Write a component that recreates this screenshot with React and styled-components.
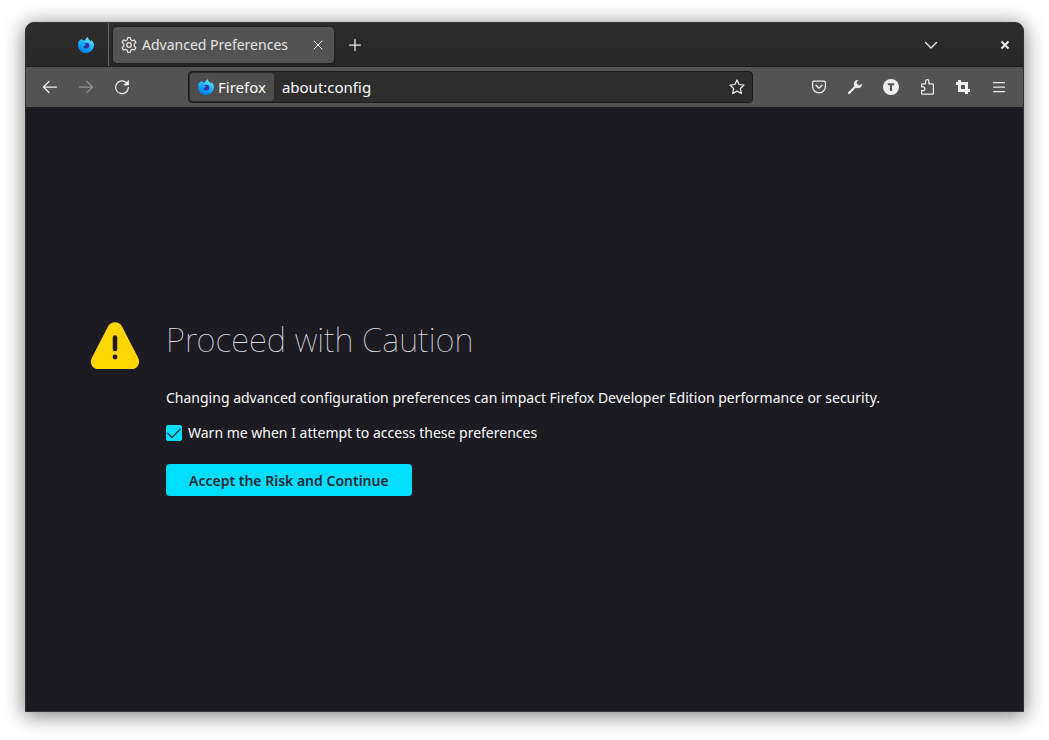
import React, { useState } from "react";
import styled, { createGlobalStyle } from "styled-components";

const GlobalStyle = createGlobalStyle`
  * {
    box-sizing: border-box;
  }

  body {
    margin: 0;
    background: #fff;
    color: #fbfbfe;
    font-family: "Noto Sans", sans-serif;
    font-size: 14px;
  }

  button,
  input {
    font: inherit;
    color: inherit;
  }
`;

const Desktop = styled.div`
  display: flex;
  min-height: 100vh;
  padding: 22px 25px 28px;
`;

const Window = styled.div`
  flex: 1;
  display: flex;
  flex-direction: column;
  min-width: 0;
  overflow: hidden;
  border: 1px solid #303032;
  border-radius: 9px 9px 0 0;
  background: #1c1b22;
  box-shadow: 0 3px 20px 1px rgba(0, 0, 0, 0.5);
`;

const TabBar = styled.header`
  display: flex;
  align-items: center;
  height: 44px;
  border-bottom: 1px solid #1c1c1c;
  background: linear-gradient(#2d2d2d, #282828);
`;

const PinnedApp = styled.button`
  display: flex;
  align-items: center;
  justify-content: flex-end;
  align-self: stretch;
  width: 83px;
  padding: 0 14px 0 0;
  border: 0;
  border-right: 1px solid #666;
  background: none;
`;

const Tab = styled.div`
  display: flex;
  align-items: center;
  width: 221px;
  height: 36px;
  margin-left: 4px;
  padding: 0 8px;
  border-radius: 4px;
  background: #535353;
  color: #e4e4e4;
  box-shadow: 0 0 3px rgba(0, 0, 0, 0.6);
`;

const TabTitle = styled.span`
  flex: 1;
  margin-left: 5px;
  white-space: nowrap;
`;

const IconButton = styled.button`
  display: flex;
  align-items: center;
  justify-content: center;
  flex: none;
  width: ${(props) => props.$width || 36}px;
  height: 32px;
  padding: 0;
  border: 0;
  background: none;
  color: #eee;
  opacity: ${(props) => (props.disabled ? 0.4 : 1)};
`;

const Spring = styled.div`
  flex: ${(props) => (props.$max ? `0 1 ${props.$max}px` : 1)};
`;

const NavBar = styled.nav`
  display: flex;
  align-items: center;
  height: 40px;
  padding: 0 6px;
  background: #535353;
`;

const UrlBar = styled.div`
  flex: 1;
  display: flex;
  align-items: center;
  min-width: 0;
  height: 32px;
  padding: 0 0 0 1px;
  border: 1px solid #1a1a1a;
  border-radius: 4px;
  background: #2d2d2d;
  font-size: 15px;
`;

const Identity = styled.span`
  display: flex;
  align-items: center;
  gap: 4px;
  height: 28px;
  padding: 0 8px;
  border-radius: 3px;
  background: #4d4d4d;
`;

const UrlInput = styled.input`
  flex: 1;
  min-width: 0;
  padding: 0 8px;
  border: 0;
  outline: 0;
  background: none;
`;

const Page = styled.main`
  flex: 1;
  display: flex;
  align-items: center;
  padding: 0 64px;
`;

const Warning = styled.section`
  display: flex;
  align-items: flex-start;
  gap: 26px;
`;

const Title = styled.h1`
  margin: 0 0 29px;
  color: #dedee3;
  font-size: 33px;
  font-weight: 100;
  line-height: 36px;
`;

const Text = styled.p`
  margin: 0 0 14px;
  line-height: 21px;
`;

const CheckRow = styled.label`
  display: flex;
  align-items: center;
  gap: 6px;
  margin-bottom: 21px;
  line-height: 21px;
`;

const Checkbox = styled.input`
  appearance: none;
  width: 16px;
  height: 16px;
  margin: 0;
  border: 1px solid #8f8f9d;
  border-radius: 2px;

  &:checked {
    border-color: #00ddff;
    background: #00ddff
      url("data:image/svg+xml,%3Csvg xmlns='http://www.w3.org/2000/svg' viewBox='0 0 16 16'%3E%3Cpath d='M1.500 8l4.500 4.500L14.500 4' fill='none' stroke='%232b2a33' stroke-width='1.200'/%3E%3C/svg%3E")
      center / 16px;
  }
`;

const PrimaryButton = styled.button`
  height: 32px;
  padding: 0 23px;
  border: 0;
  border-radius: 4px;
  background: #00ddff;
  color: #2b2a33;
  font-weight: 600;
`;

function Svg({ size = 16, children, ...rest }) {
  return (
    <svg
      width={size}
      height={size}
      viewBox="0 0 16 16"
      fill="none"
      stroke="currentColor"
      strokeWidth="1.25"
      strokeLinecap="round"
      strokeLinejoin="round"
      aria-hidden="true"
      {...rest}
    >
      {children}
    </svg>
  );
}

function FirefoxLogo({ id }) {
  return (
    <Svg stroke="none">
      <defs>
        <linearGradient id={id} x1="0.8" y1="0" x2="0.3" y2="1">
          <stop offset="0" stopColor="#80f5ee" />
          <stop offset="0.35" stopColor="#35c8fb" />
          <stop offset="0.7" stopColor="#0a9dfa" />
          <stop offset="1" stopColor="#0877ea" />
        </linearGradient>
      </defs>
      <path
        d="M10.300 0c-.5 1.200-.1 2.200 1 3 .9.600 1.500 1.100 1.900 1.900.2-.8.100-1.400-.1-2 2 1.300 2.900 3.300 2.900 5.300A7.800 7.800 0 0 1 8 16 7.900 7.900 0 0 1 0 8.200c0-2 .5-3.900 1.300-5.300 0 .5.100.8.300 1.100C2.100 3.200 2.900 2.300 4 1.700c-.1.700.1 1.200.5 1.700.8-.1 1.500 0 2.200.3C7.300 2.100 8.600.6 10.300 0z"
        fill={`url(#${id})`}
      />
      <path
        d="M5.200 6.300c.9-.4 1.700-.6 2.500-.6.800.1 1.300.2 1.800.4 1.500.600 2.300 1.900 1.800 3.400-.5 1.400-1.800 2.100-3.300 2-1.700-.1-3-1.300-3.200-2.800.7.300 1.200.2 1.800-.1.500-.3 1.200-.4 1.500-.9-1.200-.2-1.900-.6-2.900-1.400z"
        fill="#35309c"
      />
      <path
        d="M3.300 5.200c.9-.3 2.100-.1 2.800.7.500.6 1.200.9 2.200 1-.3.900-1.300 1-2 1.300-.8.400-.6 1.200.1 1.900-1.800-.1-3.500-2.600-3.100-4.900z"
        fill="#16a9fb"
      />
    </Svg>
  );
}

function App() {
  const [warn, setWarn] = useState(true);
  const [url, setUrl] = useState("about:config");

  return (
    <>
      <GlobalStyle />
      <Desktop>
        <Window>
          <TabBar>
            <PinnedApp aria-label="Firefox View">
              <FirefoxLogo id="viewLogo" />
            </PinnedApp>
            <Tab>
              <Svg>
                <circle cx="8" cy="8" r="2.300" />
                <path d="M6.700.700h2.600l.5 2.100 1.500.9 2.200-.7 1.400 2.400L13.200 7v2l1.700 1.600-1.400 2.400-2.200-.7-1.500.9-.5 2.100H6.700l-.5-2.100-1.500-.9-2.200.7-1.400-2.400L2.800 9V7L1.100 5.400 2.500 3l2.200.7 1.500-.9z" />
              </Svg>
              <TabTitle>Advanced Preferences</TabTitle>
              <IconButton $width={16} aria-label="Close tab">
                <Svg strokeWidth="1">
                  <path d="M4 4l8 8M12 4l-8 8" />
                </Svg>
              </IconButton>
            </Tab>
            <IconButton $width={42} aria-label="New tab">
              <Svg>
                <path d="M8 2.500v11M2.500 8h11" />
              </Svg>
            </IconButton>
            <Spring />
            <IconButton aria-label="List all tabs">
              <Svg>
                <path d="M2.500 5.500L8 11l5.500-5.500" />
              </Svg>
            </IconButton>
            <Spring $max={38} />
            <IconButton aria-label="Close window">
              <Svg strokeWidth="2" strokeLinecap="butt">
                <path d="M4.500 4.500l7 7M11.500 4.500l-7 7" />
              </Svg>
            </IconButton>
          </TabBar>
          <NavBar>
            <IconButton aria-label="Back">
              <Svg>
                <path d="M14.500 8H1.500M7 2.500L1.500 8 7 13.500" />
              </Svg>
            </IconButton>
            <IconButton aria-label="Forward" disabled>
              <Svg>
                <path d="M1.500 8h13M9 2.500L14.500 8 9 13.500" />
              </Svg>
            </IconButton>
            <IconButton aria-label="Reload">
              <Svg>
                <path d="M12.500 3.700A6.400 6.400 0 1 0 14.400 8.500" />
                <path d="M14.500 1.700v4.300H10.200z" fill="currentColor" strokeWidth="0.800" />
              </Svg>
            </IconButton>
            <Spring $max={48} />
            <UrlBar>
              <Identity>
                <FirefoxLogo id="urlLogo" />
                Firefox
              </Identity>
              <UrlInput
                aria-label="Address"
                value={url}
                onChange={(e) => setUrl(e.target.value)}
              />
              <IconButton $width={30} aria-label="Bookmark this page">
                <Svg>
                  <path d="M8 1l2.100 4.500 4.900.6-3.600 3.400.9 5L8 12.100l-4.300 2.400.9-5L1 6.100l4.900-.6z" />
                </Svg>
              </IconButton>
            </UrlBar>
            <Spring $max={48} />
            <IconButton aria-label="Save to Pocket">
              <Svg>
                <path d="M2.800 2.100h10.400q1.200 0 1.200 1.200v4.200a6.400 6.400 0 0 1-12.800 0V3.300q0-1.200 1.200-1.200z" />
                <path d="M5 6.200l3 3 3-3" />
              </Svg>
            </IconButton>
            <IconButton aria-label="Developer tools">
              <Svg>
                <path d="M2 14l7-7" strokeWidth="2.200" />
                <path
                  d="M10.800 1.300a3.800 3.800 0 1 0 3.900 3.900l-2 1.300-2.400-.6-.8-2.400z"
                  fill="currentColor"
                  strokeWidth="0.600"
                />
              </Svg>
            </IconButton>
            <IconButton aria-label="Account">
              <Svg stroke="none">
                <circle cx="8" cy="8" r="8" fill="currentColor" />
                <path d="M4.800 4.300h6.400v1.900H9.100v5.800H6.900V6.200H4.800z" fill="#535353" />
              </Svg>
            </IconButton>
            <IconButton aria-label="Extensions">
              <Svg>
                <path d="M6.500 4.800V2.400a1.700 1.700 0 0 1 3.400 0v2.400h3.600q.9 0 .9.900v8.600q0 .9-.9.900h-10q-.9 0-.9-.9v-2.700h1.700a1.500 1.500 0 0 0 1.500-1.500V9.300a1.500 1.500 0 0 0-1.500-1.500H2.600V5.700q0-.9.900-.9z" />
              </Svg>
            </IconButton>
            <IconButton aria-label="Screenshot">
              <Svg strokeWidth="3" strokeLinecap="butt" strokeLinejoin="miter">
                <path d="M1 4.500h10.500V15M4.500 1v10.500H15" />
              </Svg>
            </IconButton>
            <IconButton aria-label="Menu">
              <Svg>
                <path d="M2.500 3.500h11M2.500 8h11M2.500 12.500h11" />
              </Svg>
            </IconButton>
          </NavBar>
          <Page>
            <Warning>
              <Svg size={50} viewBox="0 0 50 50" stroke="none">
                <path
                  d="M18 4.500C21-1.100 29-1.100 32 4.500l16 31C51 41 47.500 47 42 47H8c-5.500 0-9-6-6-11.500z"
                  fill="#ffd500"
                />
                <path d="M25 15.500v11.500" stroke="#1c1b22" strokeWidth="4.500" />
                <circle cx="25" cy="35" r="2.400" fill="#1c1b22" />
              </Svg>
              <div>
                <Title>Proceed with Caution</Title>
                <Text>
                  Changing advanced configuration preferences can impact Firefox
                  Developer Edition performance or security.
                </Text>
                <CheckRow>
                  <Checkbox
                    type="checkbox"
                    checked={warn}
                    onChange={(e) => setWarn(e.target.checked)}
                  />
                  Warn me when I attempt to access these preferences
                </CheckRow>
                <PrimaryButton>Accept the Risk and Continue</PrimaryButton>
              </div>
            </Warning>
          </Page>
        </Window>
      </Desktop>
    </>
  );
}

export default App;
